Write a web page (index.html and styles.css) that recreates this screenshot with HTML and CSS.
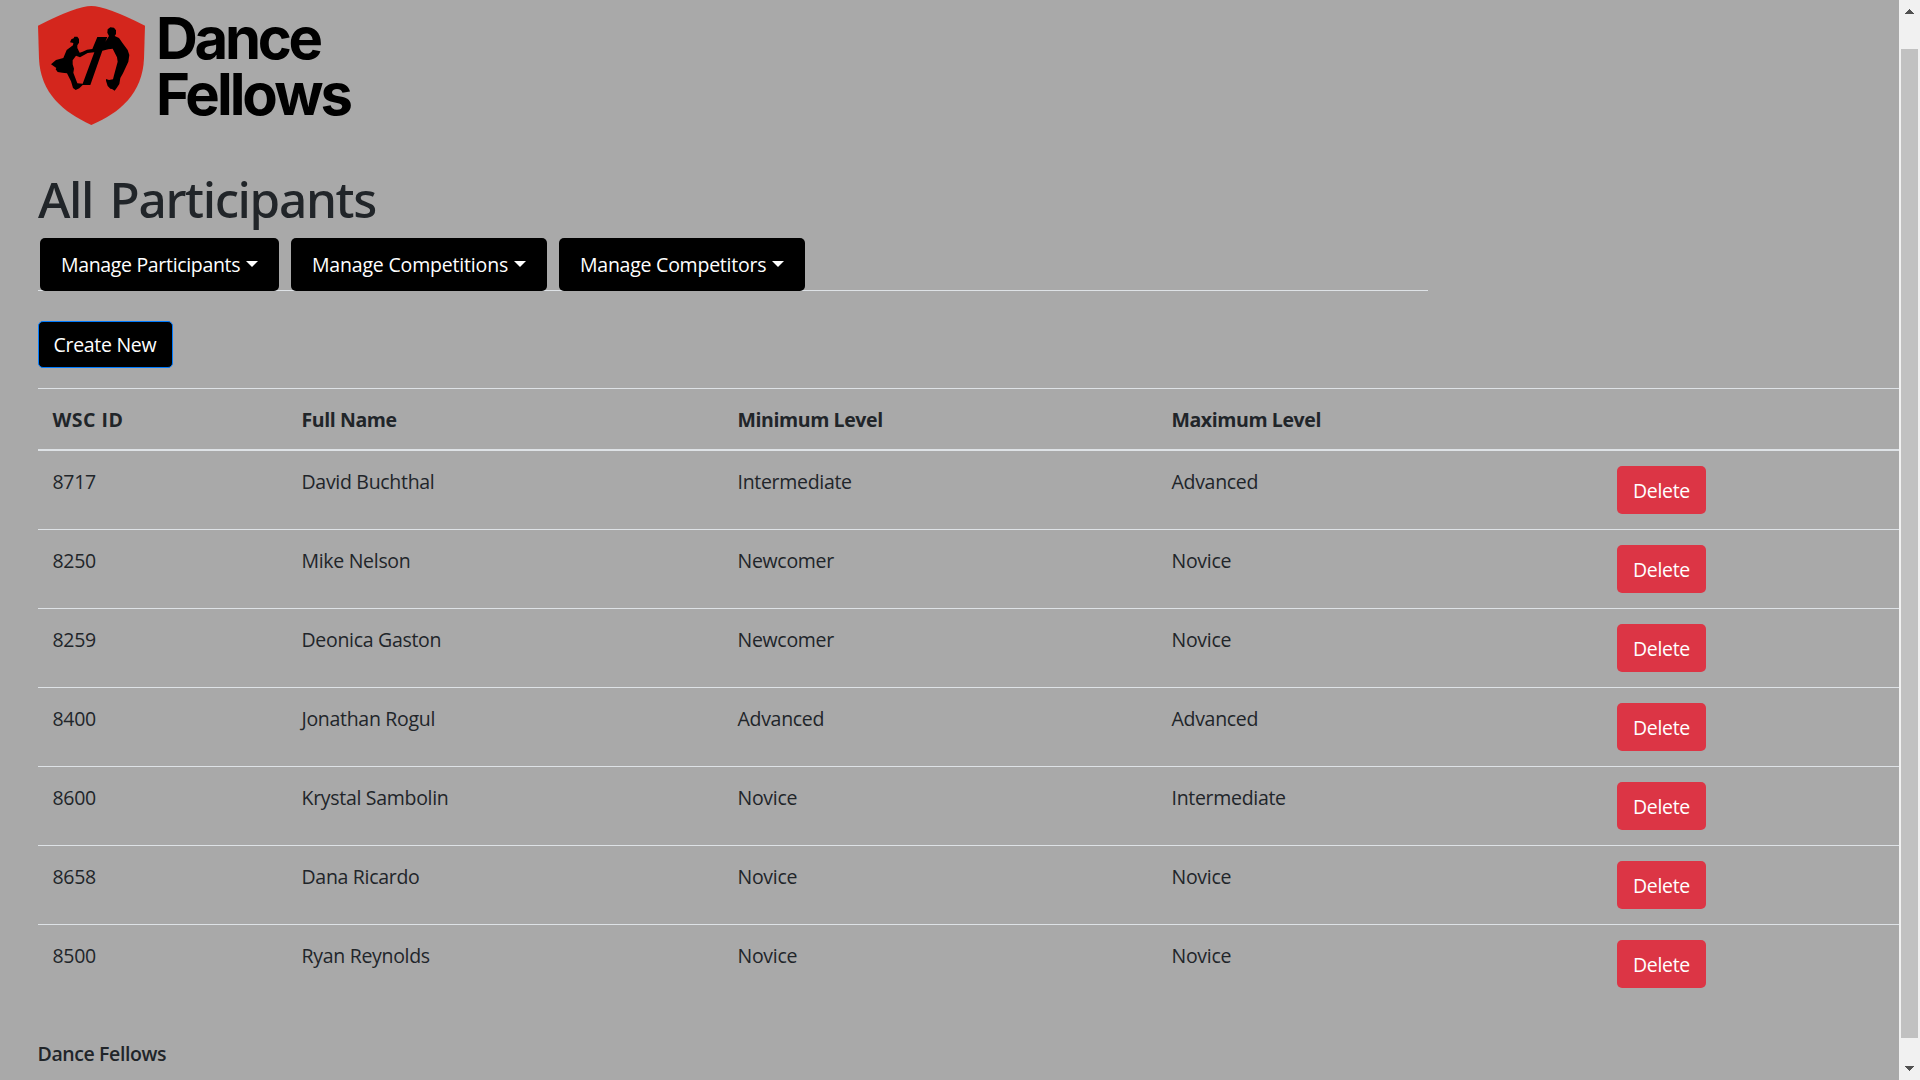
FILE: index.html
```
<!DOCTYPE html>
<html lang="en">
<head>
<meta charset="utf-8">
<title>All Participants - Dance Fellows</title>
<link rel="stylesheet" href="styles.css">
</head>
<body>
<div class="page">
  <header class="brand">
    <svg class="brand-mark" viewBox="0 0 390 390" aria-hidden="true">
      <path fill="#d4261d" d="M24 77Q140 18 184 18Q228 18 345 77L342 175C338 280 270 339 184 375C100 337 31 280 27 175Z"/>
      <path transform="translate(45 60)" fill-rule="evenodd" d="M75 67L79 58L86 55L88 50L97 50L102 57L102 68L97 76L97 84L104 98L113 95L126 89L142 87L157 51H187L181 65L192 48L187 38L188 28L196 22L207 23L213 31L213 42L209 48L222 54L233 70L248 90L253 105L250 125L234 160L226 174L223 192L215 204L209 212L201 207L196 206L188 198L183 182L183 177L192 180L204 178L207 166L218 125L216 112L203 86L190 88L172 92L136 195H113L103 205L92 210L84 204L78 184L66 160L52 158L38 156L32 148L34 144L18 133L33 120L55 114L65 90L84 76L85 69ZM148 97L128 99L105 112L93 107L83 121L83 133L87 146L85 158L97 190L113 191Z"/>
    </svg>
    <div class="brand-name"><span class="brand-top">Dance</span><span>Fellows</span></div>
  </header>

  <h1>All Participants</h1>
  <nav class="tabs">
    <a class="tab participants">Manage Participants</a>
    <a class="tab competitions">Manage Competitions</a>
    <a class="tab competitors">Manage Competitors</a>
  </nav>
  <a class="create">Create New</a>

  <table>
    <colgroup><col class="col-id"><col class="col-name"><col class="col-min"><col class="col-max"><col></colgroup>
    <thead>
      <tr><th class="wide">WSC ID</th><th>Full Name</th><th>Minimum Level</th><th>Maximum Level</th><th></th></tr>
    </thead>
    <tbody>
      <tr><td>8717</td><td>David Buchthal</td><td>Intermediate</td><td>Advanced</td><td class="action"><button>Delete</button></td></tr>
      <tr><td>8250</td><td>Mike Nelson</td><td>Newcomer</td><td>Novice</td><td class="action"><button>Delete</button></td></tr>
      <tr><td>8259</td><td>Deonica Gaston</td><td>Newcomer</td><td>Novice</td><td class="action"><button>Delete</button></td></tr>
      <tr><td>8400</td><td>Jonathan Rogul</td><td>Advanced</td><td>Advanced</td><td class="action"><button>Delete</button></td></tr>
      <tr><td>8600</td><td>Krystal Sambolin</td><td>Novice</td><td>Intermediate</td><td class="action"><button>Delete</button></td></tr>
      <tr><td>8658</td><td>Dana Ricardo</td><td>Novice</td><td>Novice</td><td class="action"><button>Delete</button></td></tr>
      <tr><td>8500</td><td>Ryan Reynolds</td><td>Novice</td><td>Novice</td><td class="action"><button>Delete</button></td></tr>
    </tbody>
  </table>

  <footer>Dance Fellows</footer>
</div>
<aside class="scrollbar" aria-hidden="true">
  <svg width="9" height="5" viewBox="0 0 9 5" shape-rendering="crispEdges"><path d="M4 0h1v1h1v1h1v1h1v1h1v1H0V4h1V3h1V2h1V1h1z"/></svg>
  <div class="thumb"></div>
  <svg width="9" height="5" viewBox="0 0 9 5" shape-rendering="crispEdges"><path d="M0 0h9v1H8v1H7v1H6v1H5v1H4V4H3V3H2V2H1V1H0z"/></svg>
</aside>
</body>
</html>
```
FILE: styles.css
```
* { box-sizing: border-box; }

body {
  margin: 0;
  height: 1080px;
  overflow: hidden;
  display: flex;
  background: #a9a9a9;
  color: #212529;
  font: 400 19.5px/30px "Open Sans", "Noto Sans", sans-serif;
  letter-spacing: -0.3px;
}

.page { flex: 1; padding-left: 38px; }

.brand { display: flex; height: 130px; margin-left: -8px; }
.brand-mark { width: 130px; height: 130px; }
.brand-name {
  display: flex;
  flex-direction: column;
  padding-top: 10px;
  margin-left: -4px;
  color: #000;
  font: 700 58px/56px Inter, "Liberation Sans", sans-serif;
  letter-spacing: -3px;
}
.brand-top { letter-spacing: -3.3px; }

h1 {
  margin: 39px 0 9px;
  font-family: "Noto Sans", sans-serif;
  font-size: 49.5px;
  font-weight: 500;
  line-height: 60px;
  letter-spacing: -1.35px;
  word-spacing: 5px;
}

.tabs {
  display: flex;
  gap: 12px;
  width: 1390px;
  height: 53px;
  padding-left: 2px;
  border-bottom: 1px solid #dee2e6;
}
.tab {
  display: flex;
  align-items: center;
  height: 53px;
  padding: 1px 0 0 21px;
  border-radius: 5px;
  background: #000;
  color: #fff;
}
.tab::after {
  content: "";
  margin: 0 0 2px 6px;
  border: 6px solid transparent;
  border-top-color: #fff;
  border-bottom: 0;
}
.participants { width: 239px; letter-spacing: -0.33px; }
.competitions { width: 256px; letter-spacing: -0.18px; }
.competitors { width: 246px; letter-spacing: -0.24px; }

.create {
  display: block;
  width: 135px;
  height: 47px;
  margin: 30px 0 20px;
  padding: 8px 0 0 14.5px;
  border: 1px solid #007bff;
  border-radius: 5px;
  background: #000;
  color: #fff;
}

table {
  width: 100%;
  table-layout: fixed;
  border-collapse: separate;
  border-spacing: 0;
}
.col-id { width: 249px; }
.col-name { width: 436px; }
.col-min { width: 434px; }
.col-max { width: 445px; }
th, td {
  padding: 16px 14.5px 14px;
  border-top: 1px solid #dee2e6;
  text-align: left;
  vertical-align: top;
}
th {
  height: 63px;
  border-bottom: 2px solid #dee2e6;
  font-weight: 700;
  letter-spacing: -0.4px;
}
.wide { letter-spacing: 0.5px; }
td { height: 79px; }
tbody tr:first-child td { height: 78px; border-top: 0; }
.action { padding: 15px; }

button {
  display: block;
  width: 89px;
  height: 48px;
  padding: 1px 0 0;
  border: 0;
  border-radius: 5px;
  background: #dc3545;
  color: #fff;
  font: inherit;
  letter-spacing: inherit;
}

footer { margin: 36px 0 0 -0.5px; font-weight: 600; letter-spacing: -0.4px; }

.scrollbar {
  display: flex;
  flex-direction: column;
  align-items: center;
  width: 21px;
  padding: 9px 0;
  background: #f1f1f1;
}
.scrollbar svg { fill: #505050; }
.thumb { width: 17px; height: 989px; margin: 35px 0 28px; background: #c1c1c1; }
```
